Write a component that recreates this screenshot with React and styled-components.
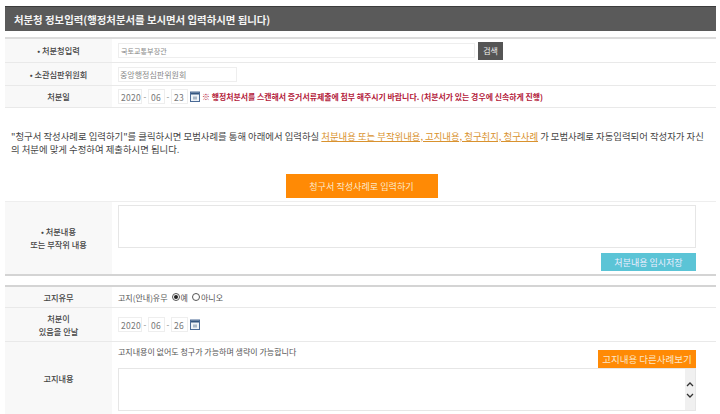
import React from 'react';
import styled, { createGlobalStyle } from 'styled-components';

const Global = createGlobalStyle`
  html, body { margin: 0; padding: 0; background: #fff; overflow: hidden; height: 414px; }
  body { font-family: "Noto Sans CJK KR", "Noto Sans", sans-serif; color: #444; font-size: 8px; }
`;
const Page = styled.div`width: 711px; padding: 6px 0 0 5px;`;
const Header = styled.h1`
  margin: 0; height: 25px; box-sizing: border-box; padding-left: 9px;
  display: flex; align-items: center;
  background: #5a5a5a; border-top: 1px solid #3c3c3c;
  color: #f4f4f4; font-size: 10.4px; font-weight: 700;
`;
const Table = styled.section`
  margin-top: ${p => p.$top}px;
  border-top: ${p => p.$line || '1px solid #eee'};
  border-bottom: ${p => p.$bottom || 'none'};
`;
const Row = styled.div`
  display: grid; grid-template-columns: 107px 1fr;
  height: ${p => p.$h}px; box-sizing: border-box;
  border-bottom: ${p => p.$plain ? 'none' : '1px solid #e9e9e9'};
`;
const Label = styled.div`
  background: #f8f8f8; display: flex; flex-direction: column;
  align-items: center; justify-content: center;
  font-size: 8.2px; font-weight: 500; line-height: 13px; color: #444; text-align: center;
`;
const Cell = styled.div`
  display: flex; align-items: center; gap: ${p => p.$gap ?? 3}px; padding-left: 6px; min-width: 0;
`;
const Stack = styled.div`
  padding: ${p => p.$top || 0}px 20px 0 6px; display: flex; flex-direction: column;
`;
const Input = styled.div`
  box-sizing: border-box; height: ${p => p.$h || 15}px; width: ${p => p.$w}px;
  border: 1px solid #eee; background: #fff; padding-left: ${p => p.$pad ?? 2}px;
  display: flex; align-items: center; color: #888; font-size: ${p => p.$f || 8}px;
`;
const DateBox = styled(Input)`font-size: 8.5px; letter-spacing: .3px; color: #777;`;
const Dash = styled.span`color: #777; font-size: 8px; width: 4px; text-align: center;`;
const SearchBtn = styled.div`
  width: 25px; height: 18px; background: #555; color: #eee;
  display: flex; align-items: center; justify-content: center; font-size: 8px;
`;
const Warn = styled.span`color: #b3203a; font-size: 7.9px; font-weight: 700; white-space: nowrap; margin-left: 1px;`;
const Note = styled.p`
  margin: 22px 0 0 6px; width: 698px; font-size: 9.4px; line-height: 13px; color: #444; word-break: break-all;
`;
const Link = styled.span`color: #d9922e; text-decoration: underline;`;
const Center = styled.div`display: flex; justify-content: center; margin: 18px 0 3px; padding-left: 2px;`;
const Orange = styled.div`
  background: #ff8a05; color: #fbe7c8; display: flex; align-items: center; justify-content: center;
  width: ${p => p.$w}px; height: ${p => p.$h}px; font-size: ${p => p.$f}px;
`;
const Area = styled.div`
  box-sizing: border-box; height: 43px; width: 578px; background: #fff; border: 1px solid #e6e6e6;
  display: flex; justify-content: flex-end;
`;
const Teal = styled.div`
  margin: 5px 0 0 483px; width: 95px; height: 18px; background: #5bc4d6; color: #eef;
  display: flex; align-items: center; justify-content: center; font-size: 9px;
`;
const Scroll = styled.div`
  width: 10px; background: #f0f0f0; display: flex; flex-direction: column; align-items: center;
  justify-content: center; gap: 6px;
`;
const TopLine = styled.div`
  display: flex; justify-content: space-between; align-items: flex-start; width: 578px; height: 18px; margin-top: 8px;
`;
const Radio = styled.span`
  width: 8px; height: 8px; border-radius: 50%; border: 1px solid #555; box-sizing: border-box;
  display: inline-flex; align-items: center; justify-content: center;
  &::after { content: ''; width: 4px; height: 4px; border-radius: 50%; background: ${p => p.$on ? '#222' : 'transparent'}; }
`;
const Opt = styled.span`display: inline-flex; align-items: center; gap: 1px; margin-left: ${p => p.$left}px; color: #555;`;
const Plain = styled.span`color: #555; font-size: 8px;`;
const Hint = styled(Plain)`line-height: 4px;`;

const Cal = () => (
  <svg width="10" height="11" viewBox="0 0 10 11" style={{ marginLeft: 1 }}>
    <rect x=".5" y="1" width="9" height="9.5" fill="#eef3f8" stroke="#4a6a96" />
    <rect x="1" y="1.5" width="8" height="2" fill="#33557f" />
    <rect x="3" y="5.5" width="4" height="3" fill="#a9b8c8" />
  </svg>
);
const Chev = ({ d }) => (
  <svg width="8" height="5" viewBox="0 0 8 5"><path d={d} fill="none" stroke="#333" strokeWidth="1.3" /></svg>
);
const DateField = ({ y, m, d }) => (
  <>
    <DateBox $w={24}>{y}</DateBox><Dash>-</Dash>
    <DateBox $w={17}>{m}</DateBox><Dash>-</Dash>
    <DateBox $w={17}>{d}</DateBox><Cal />
  </>
);

export default function App() {
  return (
    <Page>
      <Global />
      <Header>처분청 정보입력(행정처분서를 보시면서 입력하시면 됩니다)</Header>
      <Table $top={6} $line="2px solid #dcdcdc">
        <Row $h={24}><Label>• 처분청입력</Label><Cell><Input $w={357} $f={7.1} $pad={2}>국토교통부장관</Input><SearchBtn>검색</SearchBtn></Cell></Row>
        <Row $h={23}><Label>• 소관심판위원회</Label><Cell><Input $w={119} $pad={1}>중앙행정심판위원회</Input></Cell></Row>
        <Row $h={22}><Label>처분일</Label><Cell $gap={1}><DateField y="2020" m="06" d="23" /><Warn>※ 행정처분서를 스캔해서 증거서류제출에 첨부 해주시기 바랍니다. (처분서가 있는 경우에 신속하게 진행)</Warn></Cell></Row>
      </Table>
      <Note>"청구서 작성사례로 입력하기"를 클릭하시면 모범사례를 통해 아래에서 입력하실 <Link>처분내용 또는 부작위내용, 고지내용, 청구취지, 청구사례</Link> 가 모범사례로 자동입력되어 작성자가 자신의 처분에 맞게 수정하여 제출하시면 됩니다.</Note>
      <Center><Orange $w={152} $h={24} $f={9.1}>청구서 작성사례로 입력하기</Orange></Center>
      <Table $top={0} $bottom="2px solid #d4d4d4">
        <Row $h={72} $plain>
          <Label>• 처분내용<br />또는 부작위 내용</Label>
          <Stack $top={3}>
            <Area />
            <Teal>처분내용 임시저장</Teal>
          </Stack>
        </Row>
      </Table>
      <Table $top={9} $line="2px solid #d4d4d4">
        <Row $h={21}><Label>고지유무</Label><Cell $gap={2}><Plain>고지(안내)유무</Plain><Opt $left={2}><Radio $on />예</Opt><Opt $left={2}><Radio />아니오</Opt></Cell></Row>
        <Row $h={34}><Label>처분이<br />있음을 안날</Label><Cell $gap={1}><DateField y="2020" m="06" d="26" /></Cell></Row>
        <Row $h={72} $plain>
          <Label>고지내용</Label>
          <Stack>
            <TopLine><Hint>고지내용이 없어도 청구가 가능하며 생략이 가능합니다</Hint><Orange $w={98} $h={18} $f={9.5}>고지내용 다른사례보기</Orange></TopLine>
            <Area><Scroll><Chev d="M1 4 L4 1 L7 4" /><Chev d="M1 1 L4 4 L7 1" /></Scroll></Area>
          </Stack>
        </Row>
      </Table>
    </Page>
  );
}
